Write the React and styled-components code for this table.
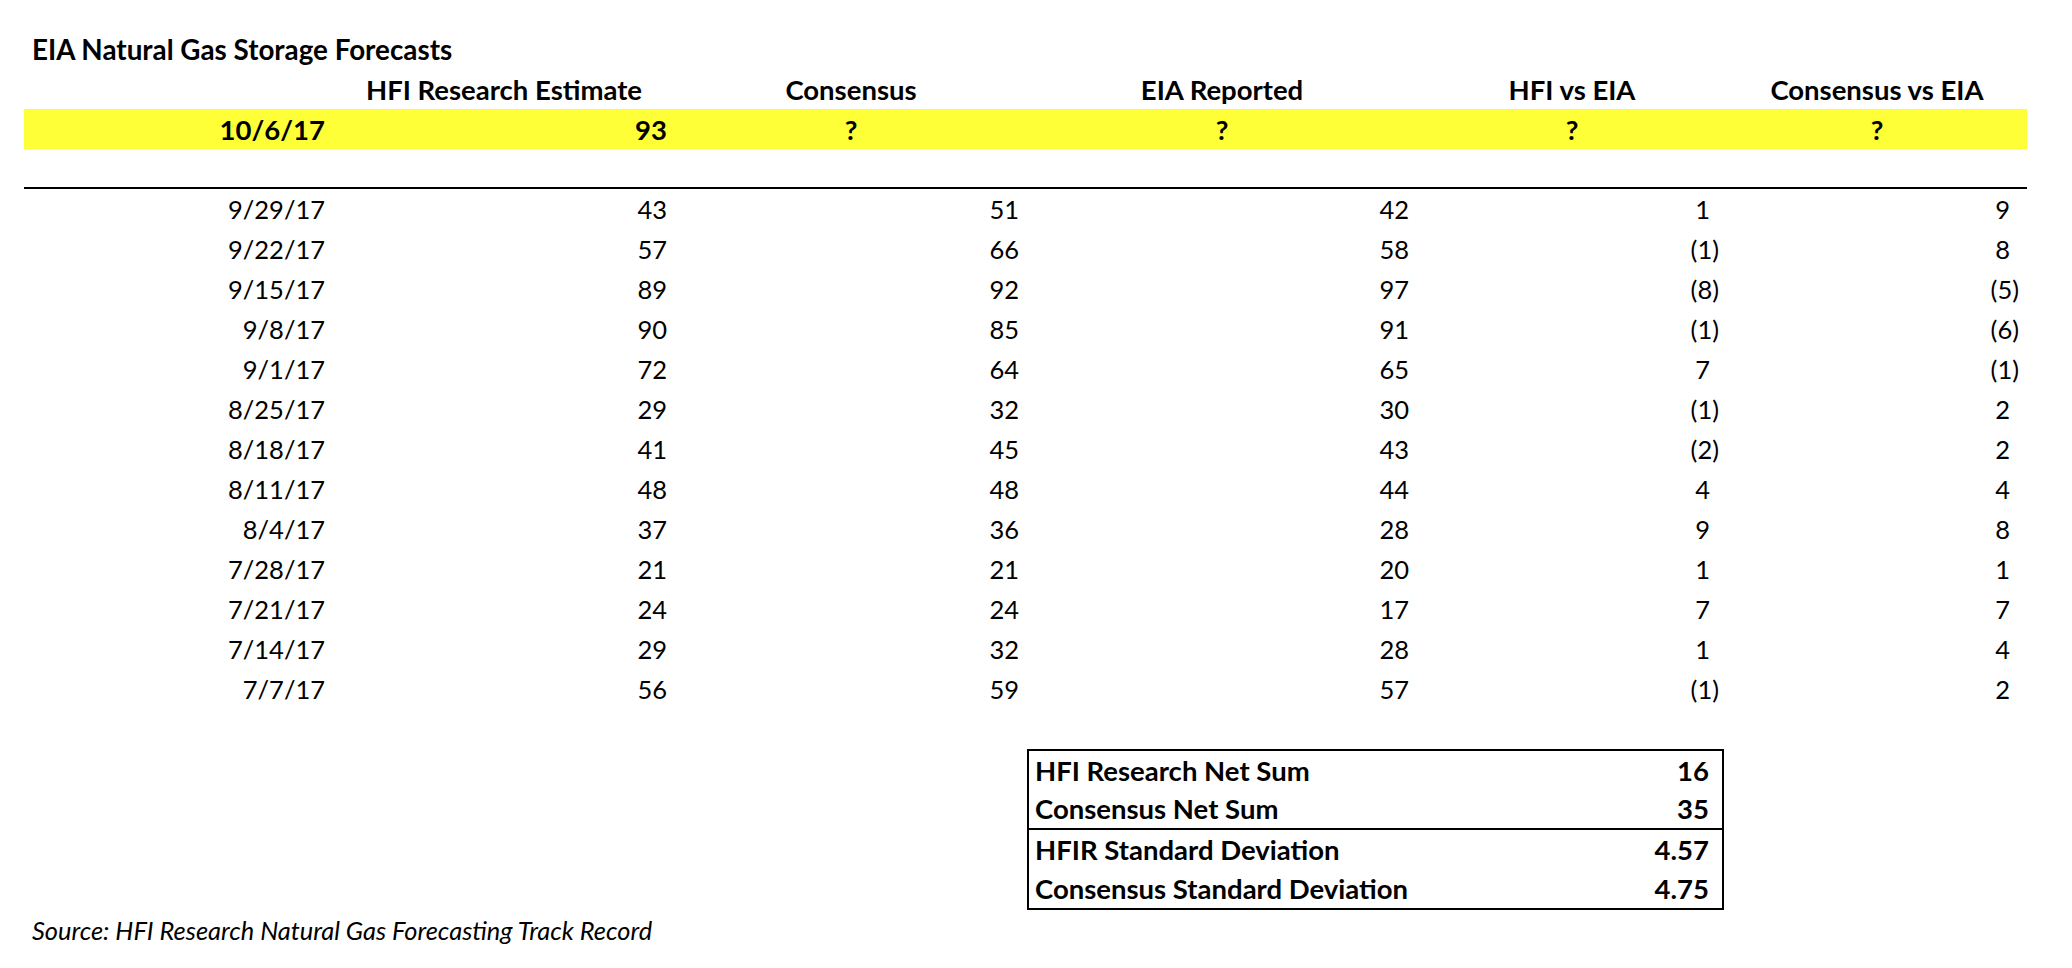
import React from 'react';
import styled, { createGlobalStyle } from 'styled-components';

const COLS = '309px 342px 352px 390px 310px 300px';

const rows = [
  ['9/29/17', 43, 51, 42, 1, 9],
  ['9/22/17', 57, 66, 58, -1, 8],
  ['9/15/17', 89, 92, 97, -8, -5],
  ['9/8/17', 90, 85, 91, -1, -6],
  ['9/1/17', 72, 64, 65, 7, -1],
  ['8/25/17', 29, 32, 30, -1, 2],
  ['8/18/17', 41, 45, 43, -2, 2],
  ['8/11/17', 48, 48, 44, 4, 4],
  ['8/4/17', 37, 36, 28, 9, 8],
  ['7/28/17', 21, 21, 20, 1, 1],
  ['7/21/17', 24, 24, 17, 7, 7],
  ['7/14/17', 29, 32, 28, 1, 4],
  ['7/7/17', 56, 59, 57, -1, 2],
];

const summary = [
  ['HFI Research Net Sum', '16'],
  ['Consensus Net Sum', '35'],
  ['HFIR Standard Deviation', '4.57'],
  ['Consensus Standard Deviation', '4.75'],
];

const GlobalStyle = createGlobalStyle`
  body {
    margin: 0;
    background: #ffffff;
    color: #000000;
    font-family: Lato, "Open Sans", sans-serif;
  }
`;

const Sheet = styled.div`
  padding: 29px 0 0 24px;
  width: 2003px;
`;

const Title = styled.div`
  height: 40px;
  display: flex;
  align-items: center;
  padding-left: 8px;
  font-size: 27.8px;
  font-weight: 700;
`;

const Row = styled.div`
  display: grid;
  grid-template-columns: ${COLS};
  height: 40px;
  align-items: center;
  font-size: ${p => (p.$bold ? 27.5 : 25.5)}px;
  font-weight: ${p => (p.$bold ? 700 : 400)};
  background: ${p => (p.$highlight ? '#ffff38' : 'transparent')};
  border-bottom: ${p => (p.$rule ? '2px solid #000' : 'none')};
  box-sizing: border-box;
`;

const Cell = styled.div`
  text-align: ${p => p.$align || 'right'};
  padding-right: ${p => (p.$align === 'center' ? 0 : 8 + (p.$pad ? 9 : 0))}px;
  white-space: nowrap;
`;

const SummaryArea = styled.div`
  display: grid;
  grid-template-columns: ${COLS};
  margin-top: 40px;
`;

const SummaryBox = styled.div`
  grid-column: 4 / span 2;
  align-self: start;
  border: 2px solid #000;
  box-sizing: border-box;
  width: 697px;
`;

const SummaryRow = styled.div`
  display: flex;
  justify-content: space-between;
  align-items: center;
  height: ${p => (p.$top ? 38 : 39)}px;
  padding: 0 13px 0 6px;
  font-size: 27.5px;
  font-weight: 700;
  border-top: ${p => (p.$rule ? '2px solid #000' : 'none')};
`;

const Source = styled.div`
  height: 40px;
  display: flex;
  align-items: center;
  padding-left: 8px;
  font-size: 25.4px;
  font-style: italic;
`;

const fmt = v => (v < 0 ? `(${-v})` : String(v));

export default function App() {
  return (
    <>
      <GlobalStyle />
      <Sheet>
        <Title>EIA Natural Gas Storage Forecasts</Title>
        <Row $bold>
          <Cell />
          <Cell $align="center">HFI Research Estimate</Cell>
          <Cell $align="center">Consensus</Cell>
          <Cell $align="center">EIA Reported</Cell>
          <Cell $align="center">HFI vs EIA</Cell>
          <Cell $align="center">Consensus vs EIA</Cell>
        </Row>
        <Row $bold $highlight>
          <Cell>10/6/17</Cell>
          <Cell>93</Cell>
          <Cell $align="center">?</Cell>
          <Cell $align="center">?</Cell>
          <Cell $align="center">?</Cell>
          <Cell $align="center">?</Cell>
        </Row>
        <Row $rule />
        {rows.map(r => (
          <Row key={r[0]}>
            <Cell>{r[0]}</Cell>
            <Cell>{r[1]}</Cell>
            <Cell>{r[2]}</Cell>
            <Cell>{r[3]}</Cell>
            <Cell $pad={r[4] >= 0}>{fmt(r[4])}</Cell>
            <Cell $pad={r[5] >= 0}>{fmt(r[5])}</Cell>
          </Row>
        ))}
        <SummaryArea>
          <SummaryBox>
            {summary.map(([label, value], i) => (
              <SummaryRow key={label} $top={i === 0} $rule={i === 2}>
                <span>{label}</span>
                <span>{value}</span>
              </SummaryRow>
            ))}
          </SummaryBox>
        </SummaryArea>
        <Source>Source: HFI Research Natural Gas Forecasting Track Record</Source>
      </Sheet>
    </>
  );
}
